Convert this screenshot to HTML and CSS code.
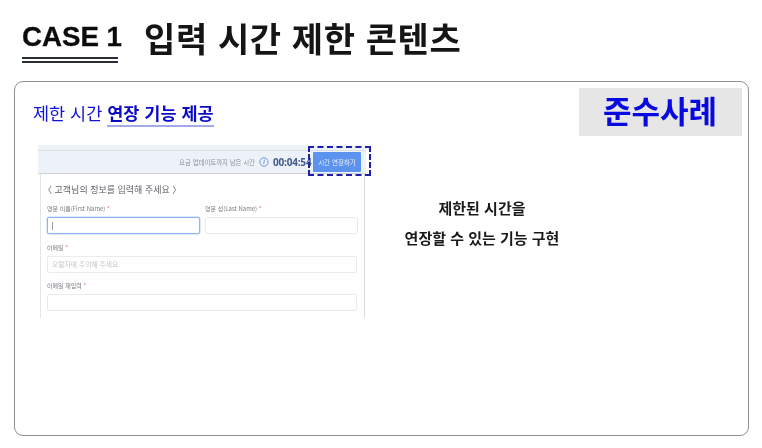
FILE: index.html
```html
<!DOCTYPE html>
<html lang="ko">
<head>
<meta charset="utf-8">
<title>CASE 1</title>
<link rel="stylesheet" href="styles.css">
</head>
<body>
<div class="slide">
  <header class="title-row">
    <span class="case">CASE 1</span>
    <h1 class="title">입력 시간 제한 콘텐츠</h1>
  </header>
  <section class="card">
    <div class="card-top">
      <p class="lead">제한 시간 <strong class="lead-strong">연장 기능 제공</strong></p>
      <div class="badge">준수사례</div>
    </div>
    <div class="card-body">
      <div class="shot">
        <div class="shot-strip"></div>
        <div class="shot-bar">
          <span class="bar-label">요금 업데이트까지 남은 시간</span>
          <svg class="clock" viewBox="0 0 12 12" width="10" height="10" aria-hidden="true"><circle cx="6" cy="6" r="5" fill="none" stroke="#5d86cf" stroke-width="1"/><path d="M6.6 3 5.6 8.4" fill="none" stroke="#5d86cf" stroke-width="1"/></svg>
          <span class="timer">00:04:54</span>
          <span class="extend">시간 연장하기</span>
        </div>
        <div class="form">
          <div class="form-title"><span class="bracket">〈</span> 고객님의 정보를 입력해 주세요 〉</div>
          <div class="pair">
            <div class="field">
              <div class="label">영문 이름(First Name) <i class="req">*</i></div>
              <div class="input focus"><span class="caret"></span></div>
            </div>
            <div class="field">
              <div class="label">영문 성(Last Name) <i class="req">*</i></div>
              <div class="input"></div>
            </div>
          </div>
          <div class="field">
            <div class="label">이메일 <i class="req">*</i></div>
            <div class="input"><span class="hint">오탈자에 주의해 주세요</span></div>
          </div>
          <div class="field">
            <div class="label">이메일 재입력 <i class="req">*</i></div>
            <div class="input"></div>
          </div>
        </div>
        <div class="dash"></div>
      </div>
      <div class="note">
        <p class="note-line">제한된 시간을</p>
        <p class="note-line">연장할 수 있는 기능 구현</p>
      </div>
    </div>
  </section>
</div>
</body>
</html>
```

FILE: styles.css
```css
* { box-sizing: border-box; }
html, body { margin: 0; padding: 0; background: #fff; }
body { width: 762px; height: 448px; overflow: hidden; font-family: "Liberation Sans", "Noto Sans CJK KR", sans-serif; }
.slide { width: 762px; height: 448px; padding: 16px 14px 0 14px; display: flex; flex-direction: column; }

.title-row { display: flex; align-items: flex-start; gap: 26px; height: 65px; padding-left: 8px; filter: blur(0.35px); }
.case { display: block; flex: none; width: 96px; height: 47px; padding-top: 5px; font-size: 27.7px; line-height: 31px; font-weight: 700; color: #0c0c0c; border-bottom: 6px double #2a2f36; white-space: nowrap; -webkit-text-stroke: 0.3px #0c0c0c; }
.title { margin: 0; font-size: 34px; line-height: 44px; font-weight: 700; color: #151515; font-family: "Noto Sans CJK KR", sans-serif; white-space: nowrap; letter-spacing: 0.6px; }

.card { width: 735px; height: 355px; border: 1.5px solid #8d8f94; border-radius: 9px; background: #fff; padding: 5.5px 6.5px 0 18px; filter: blur(0.25px); }
.card-top { display: flex; justify-content: space-between; align-items: flex-start; height: 57.5px; }
.lead { margin: 14px 0 0; font-size: 17.5px; line-height: 21px; color: #1212d8; font-family: "Noto Sans CJK KR", sans-serif; white-space: nowrap; }
.lead-strong { font-weight: 700; color: #0a0ac8; border-bottom: 2px solid #a4a8e6; padding-bottom: 0; }
.badge { width: 163px; height: 48px; background: #e6e6e6; color: #0808e0; font-family: "Noto Sans CJK KR", sans-serif; font-weight: 700; font-size: 31px; line-height: 43px; text-align: center; white-space: nowrap; }

.card-body { display: flex; align-items: flex-start; }
.shot { position: relative; width: 328px; height: 173px; margin-left: 5px; flex: none; font-family: "Noto Sans CJK KR", sans-serif; }
.shot-strip { height: 5px; background: #eef3f9; }
.shot-bar { height: 24px; background: #edf2f8; border-top: 1px solid #dde1e6; border-bottom: 1px solid #cfd3d8; display: flex; align-items: center; justify-content: flex-end; padding-right: 5px; filter: blur(0.45px); }
.bar-label { font-size: 6.4px; color: #8d929a; margin-right: 4px; white-space: nowrap; }
.clock { margin-right: 4px; }
.timer { font-size: 10px; font-weight: 700; color: #41598c; font-family: "Open Sans", sans-serif; width: 40px; white-space: nowrap; letter-spacing: -0.2px; }
.extend { width: 48px; height: 20px; background: #5b93ee; color: #e8f0ff; font-size: 6.5px; line-height: 20px; text-align: center; border-radius: 1px; white-space: nowrap; }
.form { height: 144px; margin: 0 1px 0 2px; padding: 9px 7px 0 6px; border-left: 1px solid #e3e5e8; border-right: 1px solid #d9dbdf; filter: blur(0.45px); }
.form-title { font-size: 9px; line-height: 14px; color: #5f6368; margin-bottom: 7px; white-space: nowrap; }
.bracket { margin-left: -4px; }
.pair { display: grid; grid-template-columns: 153px 153px; gap: 5px; }
.field { display: flex; flex-direction: column; }
.label { height: 13px; font-size: 6px; line-height: 10px; color: #777c83; white-space: nowrap; }
.req { color: #e07a7a; font-style: normal; }
.input { height: 17px; border: 1px solid #e9ebee; border-radius: 2px; background: #fff; margin-bottom: 8.5px; display: flex; align-items: center; padding-left: 4px; flex: none; }
.input.focus { border: 1px solid #8fb6f2; box-shadow: 0 0 0 .5px #bcd3f6; }
.caret { width: 1px; height: 8px; background: #999; }
.hint { font-size: 6.8px; color: #c2c5c9; white-space: nowrap; }
.dash { position: absolute; left: 270px; top: 1px; width: 63px; height: 30px; border: 2px dashed #1f1fa8; }

.note { margin-top: 52px; margin-left: 35px; width: 162px; text-align: center; font-family: "Noto Sans CJK KR", sans-serif; }
.note-line { margin: 0 0 8px; font-size: 15px; line-height: 22px; font-weight: 700; color: #1a1a1a; white-space: nowrap; }
```
